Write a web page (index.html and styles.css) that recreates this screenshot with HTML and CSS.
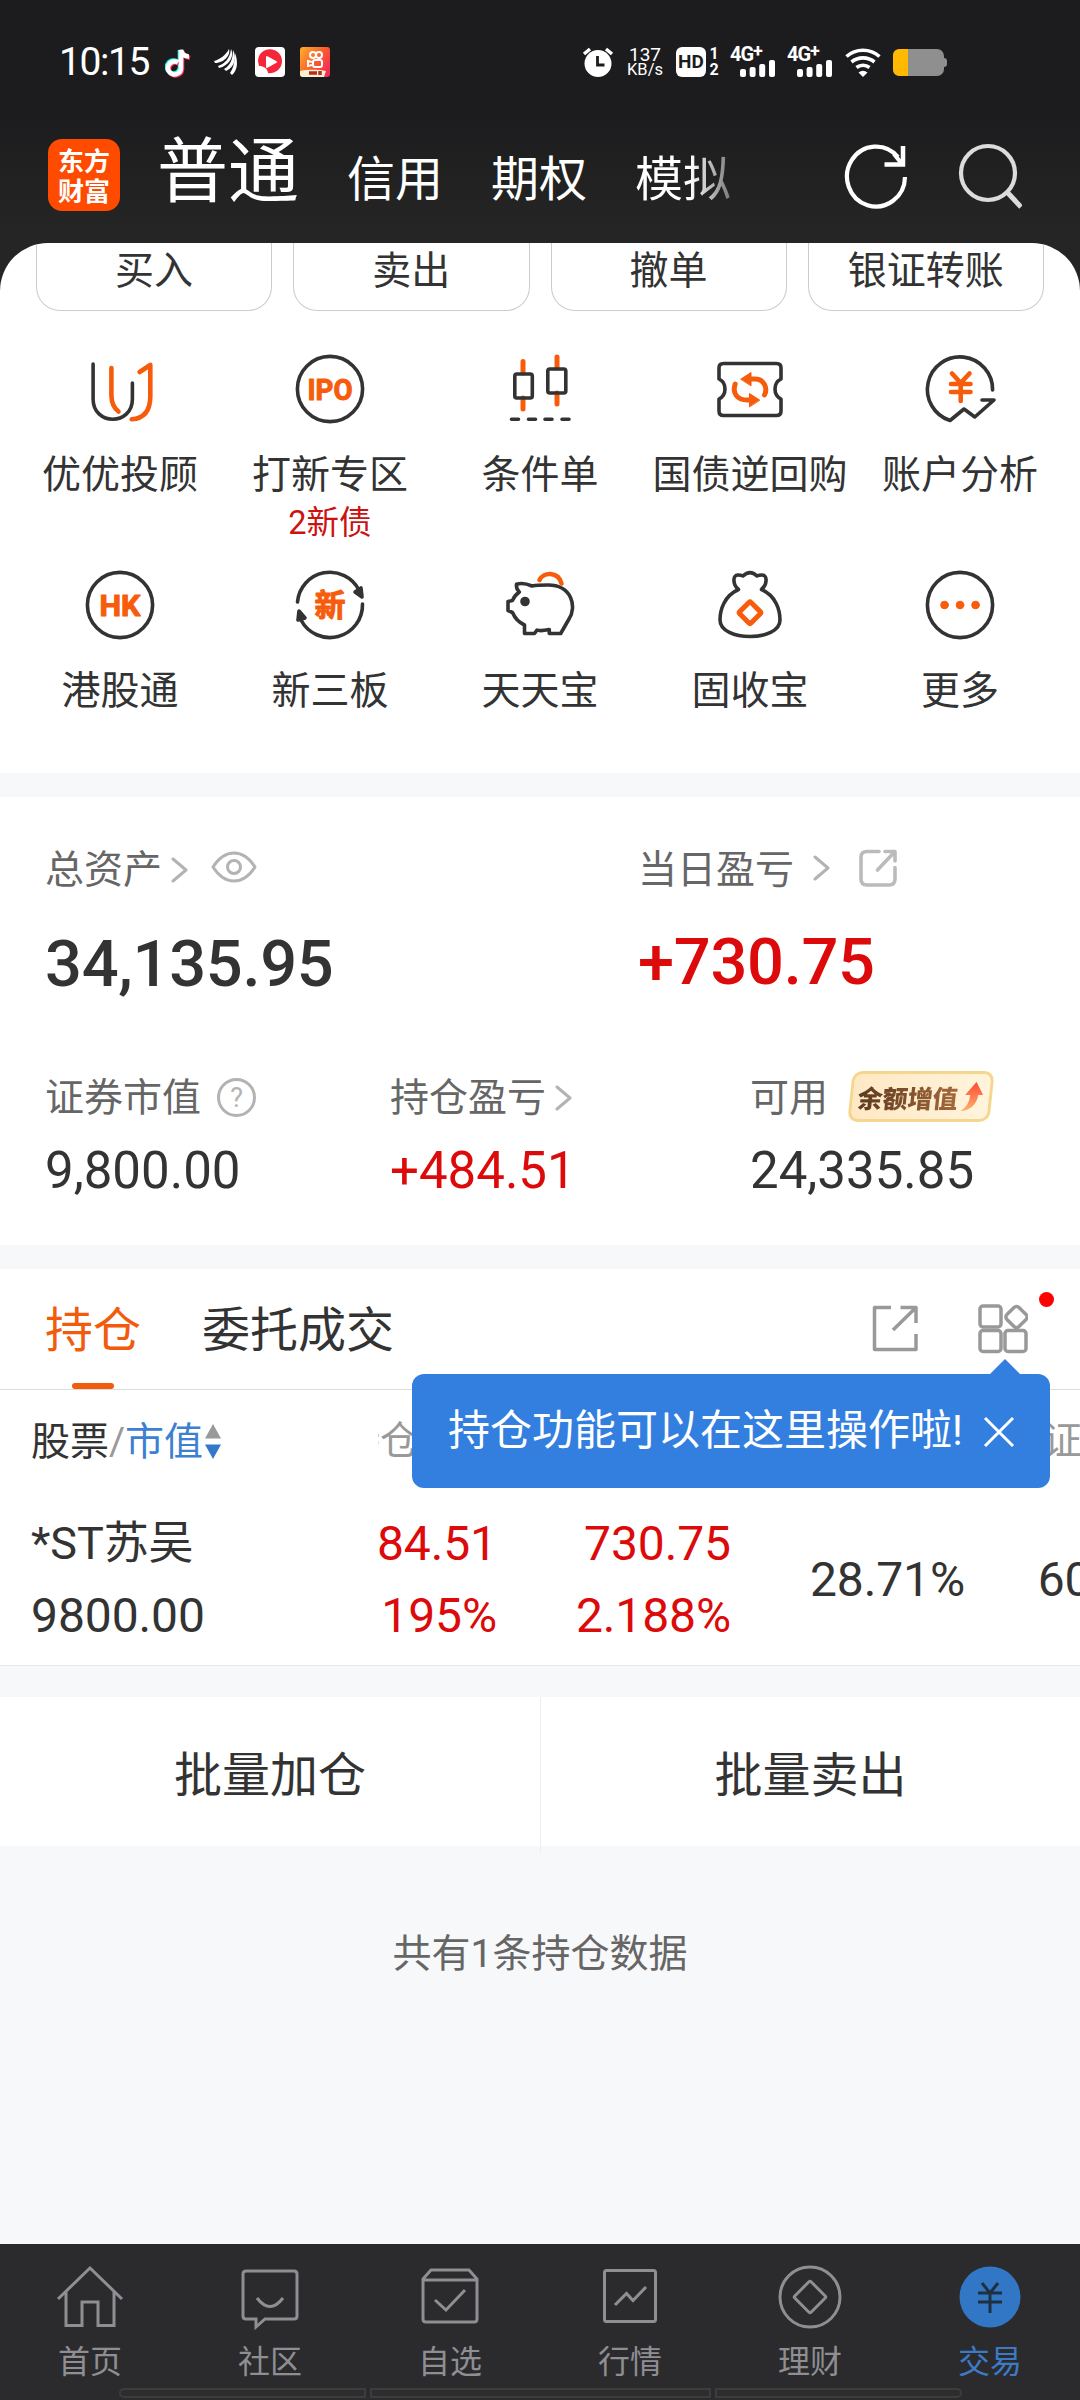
FILE: index.html
```html
<!DOCTYPE html>
<html lang="zh-CN">
<head>
<meta charset="utf-8">
<title>东方财富 交易</title>
<link rel="stylesheet" href="styles.css">
</head>
<body>
<div class="screen">
  <header class="top">
    <div class="status">
      <span class="clock">10:15</span>
      <svg class="st-tiktok" width="26" height="30" viewBox="0 0 26 30"><g fill="none" stroke-width="4.6"><path stroke="#25f4ee" d="M12 13.500a6.500 6.500 0 1 0 3 6V2c1 4 4 6 8 6"/><path stroke="#fe2c55" d="M14 15.500a6.500 6.500 0 1 0 3 6V3c1 4 4 6 8 7"/><path stroke="#fff" d="M13 14.500a6.500 6.500 0 1 0 3 6V2c1 4 4 6.500 8 6.500"/></g></svg>
      <svg class="st-wing" width="24" height="26" viewBox="0 0 24 26" fill="#fff"><path d="M0 12C5 11 12 6 15 0 17 7 9 14 1 14Z"/><path d="M4 17C11 15 16 9 17 0c4 8-3 17-12 19Z"/><path d="M10 20c6-3 9-10 9-19 4 7 2 17-7 21Z"/><path d="M16 24c3-4 5-11 5-20 3 8 3 17-3 22Z"/></svg>
      <svg class="st-video" width="30" height="30" viewBox="0 0 30 30"><rect width="30" height="30" rx="4" fill="#fff"/><path d="M3 14a12 12 0 1 1 10 12c-1-5-4-7-9-7Z" fill="#f5253a"/><path d="M12 10l9 5-9 5Z" fill="#fff" stroke="#fff" stroke-width="2" stroke-linejoin="round"/></svg>
      <svg class="st-kuai" width="30" height="30" viewBox="0 0 30 30"><defs><linearGradient id="kg" x1="0" x2="1" y2=".7"><stop stop-color="#fdb12b"/><stop offset=".6" stop-color="#fb5a2c"/><stop offset="1" stop-color="#f52c58"/></linearGradient></defs><rect width="30" height="30" rx="3" fill="url(#kg)"/><path d="M0 24c10-2 20-1 26 0l-2 6H3q-3 0-3-3Z" fill="#fff0cf"/><path d="M9 26h8M20 24v4" stroke="#b42c22" stroke-width="3.500"/><g fill="none" stroke="#fff" stroke-width="2"><circle cx="13" cy="8" r="3"/><circle cx="19" cy="8" r="3"/><rect x="13" y="13" width="9" height="7" rx="2"/><path d="M12 15l-4-1v5l4-1"/></g></svg>
      <svg class="st-alarm" width="32" height="30" viewBox="0 0 32 30"><circle cx="16" cy="16.500" r="13.500" fill="#fff"/><path d="M2 7l6-5M30 7l-6-5" stroke="#fff" stroke-width="3.500"/><path d="M15.500 9v9h7" fill="none" stroke="#1c1c1e" stroke-width="2.800"/></svg>
      <span class="speed"><b>137</b><i>KB/s</i></span>
      <span class="hd">HD</span>
      <span class="sims"><b>1</b><b>2</b></span>
      <span class="cell"><b>4G<sup>+</sup></b><svg width="36" height="17" viewBox="0 0 36 17" fill="#fff"><rect y="9" width="6" height="8" rx="2"/><rect x="9.600" y="7" width="6" height="10" rx="2"/><rect x="19.200" y="4" width="6" height="13" rx="2"/><rect x="29" width="6" height="17" rx="2"/></svg></span>
      <span class="cell"><b>4G<sup>+</sup></b><svg width="36" height="17" viewBox="0 0 36 17" fill="#fff"><rect y="9" width="6" height="8" rx="2"/><rect x="9.600" y="7" width="6" height="10" rx="2"/><rect x="19.200" y="4" width="6" height="13" rx="2"/><rect x="29" width="6" height="17" rx="2"/></svg></span>
      <svg class="st-wifi" width="36" height="30" viewBox="0 0 36 30" fill="none" stroke="#fff" stroke-width="3.600"><path d="M1.500 9.500a25 25 0 0 1 33 0M6.500 15a18 18 0 0 1 23 0M11.500 20.500a10.500 10.500 0 0 1 13 0"/><path d="M13.500 25.500q4.500-3.500 9 0L18 30Z" fill="#fff" stroke="none"/></svg>
      <svg class="st-batt" width="54" height="27" viewBox="0 0 54 27"><rect width="51" height="27" rx="7" fill="#8f8f8f"/><path d="M51 9q3 0 3 3v3q0 3-3 3Z" fill="#8f8f8f"/><path d="M15 0H7Q0 0 0 7v13q0 7 7 7h8Z" fill="#ffb900"/></svg>
    </div>
    <div class="titlebar">
      <div class="logo"><span>东方</span><span>财富</span></div>
      <nav class="accounts"><span class="acc on">普通</span><span class="acc">信用</span><span class="acc">期权</span><span class="acc fade">模拟</span></nav>
      <svg class="ic-refresh" width="64" height="66" viewBox="0 0 64 66" fill="none" stroke="#fff" stroke-width="4.200"><path d="M61 34A29 30 0 1 1 54 14"/><path d="M40.500 21.500H59V3" stroke-width="4.500"/><path d="M50 11l8 10"/></svg>
      <svg class="ic-search" width="64" height="66" viewBox="0 0 64 66" fill="none" stroke="#dcdcdc" stroke-width="4.200"><circle cx="30" cy="30" r="27"/><path d="M49 49l14 15" stroke-width="5"/></svg>
    </div>
  </header>

  <main class="panel">
    <div class="quick"><span>买入</span><span>卖出</span><span>撤单</span><span>银证转账</span></div>
    <div class="features">
      <div class="feat"><svg viewBox="-42 -42 84 84"><path d="M-26.900-25V10C-26.900 37 12.400 37 12.400 10V-6"/><path class="or" d="M-8.600-21V6Q-8.600 17-1.500 22.500M19.600-17L30.300-24V8Q30 29 11.700 30.300"/></svg><p>优优投顾</p></div>
      <div class="feat"><svg viewBox="-42 -42 84 84"><circle r="32.600"/><text class="t-ipo" y="10.500" textLength="45" lengthAdjust="spacingAndGlyphs">IPO</text></svg><p>打新专区</p><small>2新债</small></div>
      <div class="feat"><svg viewBox="-42 -42 84 84"><path class="or flat" d="M-17-27.500V-16M-17 9V20M17-32V-21M17 4V15"/><rect x="-25.200" y="-15" width="17.500" height="24" rx="2"/><rect x="7.800" y="-20" width="18" height="24" rx="2"/><path d="M-28.500 30.300h7M-11.500 30.300h7M5 30.300h7M22 30.300h7"/></svg><p>条件单</p></div>
      <div class="feat"><svg viewBox="-42 -42 84 84"><path d="M-26-25.500H26.500Q31 25.500 31-25.500Q31-25.500 31-21V-10Q19.500 0 31 10V22Q31 26.500 26.500 26.500H-26.500Q-31 26.500-31 22V10Q-19.500 0-31-10V-21Q-31-25.500-26-25.500Z" class="hide"/><path d="M-26.500-25.500H26.500Q31-25.500 31-21V-10C23-6 23 6 31 10V22Q31 26.500 26.500 26.500H-26.500Q-31 26.500-31 22V10C-23 6-23-6-31-10V-21Q-31-25.500-26.500-25.500Z"/><path class="or w5" d="M-1-10H5C14-10 18-1 14.500 6M-14.800-5C-18 4-13 11-3 11H3"/><path class="fill" d="M-9-10L1-16.500V-3.500ZM9.500 11L-.5 4.500V17.500Z"/></svg><p>国债逆回购</p></div>
      <div class="feat"><svg viewBox="-42 -42 84 84"><path d="M32.600 1A32.600 32.600 0 1 0-10 31.500L4 20L14.800 28L34 11H22"/><path class="or" d="M-8-15.500L.7-6L9.500-15.500M.7-6V12M-9-5H10.500M-9 3H10.500"/></svg><p>账户分析</p></div>
      <div class="feat"><svg viewBox="-42 -42 84 84"><circle r="32.600"/><text class="t-ipo" y="10.500" textLength="41" lengthAdjust="spacingAndGlyphs">HK</text></svg><p>港股通</p></div>
      <div class="feat"><svg viewBox="-42 -42 84 84"><path d="M-32.500-3A32.600 32.600 0 0 1 29-15M32.500-1A32.600 32.600 0 0 1-29 15"/><path class="ink" d="M25-13L31-17L32-8ZM-25 13L-32 15L-31 6Z"/><text class="t-xin" y="11">新</text></svg><p>新三板</p></div>
      <div class="feat"><svg viewBox="-42 -42 84 84"><path d="M-23.500-20.700Q-17-23-8-19Q-3-20 8-20C32-20 37 2 29 14L20.700 28.500H9.300V24.500Q0 26.500-3 25L-5.500 28.500H-15.500V20Q-24 16-27.500 7.500L-32 5.500V-3.500L-27.500-4.500Q-26-9-20.700-13Q-24-16-23.500-20.700Z"/><circle class="ink" cx="-15" cy="-3.500" r="3"/><path class="or" d="M-.5-25C3-33 18-34 21.500-21.500"/></svg><p>天天宝</p></div>
      <div class="feat"><svg viewBox="-42 -42 84 84"><path d="M-11.500-15.500C-17-20-18-30-12-30Q-9-30-7-29Q0-36 7-29Q9-30 12-30C18-30 17-20 11.500-15.500C26-9 30 5 30 15C30 37-30 37-30 15C-30 5-26-9-11.500-15.500Z"/><rect class="or w5" x="-8" y="-8" width="16" height="16" rx="1.500" transform="translate(0 7.700) rotate(45)"/></svg><p>固收宝</p></div>
      <div class="feat"><svg viewBox="-42 -42 84 84"><circle r="32.600"/><g class="fill"><circle cx="-15.500" r="3.800"/><circle r="3.800"/><circle cx="15.500" r="3.800"/></g></svg><p>更多</p></div>
    </div>
  </main>

  <section class="assets">
    <div class="totals">
      <div>
        <div class="lab">总资产<svg class="chev c1" width="18" height="26" viewBox="0 0 18 26"><path d="M2 2l13 11L2 24"/></svg><svg class="eye" width="46" height="32" viewBox="0 0 46 32"><path d="M2 16Q11 2 23 2T44 16Q35 30 23 30T2 16Z"/><circle cx="23" cy="16" r="6.500"/></svg></div>
        <div class="big">34,135.95</div>
      </div>
      <div>
        <div class="lab">当日盈亏<svg class="chev c2" width="18" height="26" viewBox="0 0 18 26"><path d="M2 2l13 11L2 24"/></svg><svg class="share" width="38" height="38" viewBox="0 0 38 38"><path d="M20 2.500H8Q2 2.500 2 8V30Q2 36 8 36H30Q36 36 36 30V18.500M26 2.500H36V12M35 3.500L18.500 21"/></svg></div>
        <div class="big red up">+730.75</div>
      </div>
    </div>
    <div class="detail">
      <div><div class="lab">证券市值<span class="help">?</span></div><div class="mid">9,800.00</div></div>
      <div><div class="lab">持仓盈亏<svg class="chev c3" width="18" height="26" viewBox="0 0 18 26"><path d="M2 2l13 11L2 24"/></svg></div><div class="mid red">+484.51</div></div>
      <div><div class="lab">可用<span class="promo"><b>余额增值</b><svg width="22" height="30" viewBox="0 0 22 30"><defs><linearGradient id="ag" x2="0" y2="1"><stop stop-color="#fb4a32"/><stop offset="1" stop-color="#ffb070"/></linearGradient></defs><path d="M13 0L21 13H16C16 22 9 29 0 29C6 25 8 20 8 13H3Z" fill="url(#ag)"/></svg></span></div><div class="mid">24,335.85</div></div>
    </div>
  </section>

  <section class="holdings">
    <div class="tabs">
      <span class="tab on">持仓</span><span class="tab">委托成交</span>
      <svg class="ic-share" width="48" height="48" viewBox="0 0 48 48"><path d="M19 2.500H2.500V44.500H44V29M28.500 2.500H44V18M43 3.500L21 25"/></svg>
      <span class="apps"><svg width="50" height="50" viewBox="0 0 50 50"><rect x="2" y="2" width="21" height="21" rx="3"/><rect x="2" y="26.500" width="21" height="21" rx="3"/><rect x="27" y="26.500" width="21" height="21" rx="3"/><rect x="-8.500" y="-8.500" width="17" height="17" rx="3.500" transform="translate(38.500 13) rotate(45)"/></svg><i class="dot"></i></span>
    </div>
    <div class="grid-head">
      <div class="name">股票<i>/</i><em>市值</em><svg width="16" height="36" viewBox="0 0 16 36"><path d="M8 0l8 14.500H0Z" fill="#999"/><path d="M8 35L0 20.500h16Z" fill="#3478c8"/></svg></div>
      <div class="cells"><span>持仓盈亏</span><span></span><span></span><span>证券代码</span></div>
    </div>
    <div class="grid-row">
      <div class="name"><span class="stock">*ST苏吴</span><span>9800.00</span></div>
      <div class="cells"><div class="red"><span>484.51</span><span>5.195%</span></div><div class="red"><span>730.75</span><span>2.188%</span></div><div><span>28.71%</span></div><div><span>600200</span></div></div>
    </div>
    <div class="tip"><span>持仓功能可以在这里操作啦!</span><svg width="32" height="32" viewBox="0 0 32 32"><path d="M2 2l28 28M30 2L2 30"/></svg></div>
  </section>

  <div class="batch"><span>批量加仓</span><span>批量卖出</span></div>
  <p class="count">共有1条持仓数据</p>

  <nav class="bottom">
    <div><svg viewBox="-36 -36 72 72"><path d="M-32 2L0-29L32 2M-24-5V28.500H-8V5H8V28.500H24V-5"/></svg><p>首页</p></div>
    <div><svg viewBox="-36 -36 72 72"><path d="M-24-26H24Q27-26 27-23V19Q27 22 24 22H-5L-14 30V22H-24Q-27 22-27 19V-23Q-27-26-24-26ZM-13 1Q0 18 13 1"/></svg><p>社区</p></div>
    <div><svg viewBox="-36 -36 72 72"><path d="M-27-18L-19-27H19L27-18V22Q27 25 24 25H-24Q-27 25-27 22ZM-27-17H27M-15 3L-4 13L15-7"/></svg><p>自选</p></div>
    <div><svg viewBox="-36 -36 72 72"><rect x="-25.500" y="-26.500" width="51" height="51" rx="2"/><path d="M-15 8L-3.500-3.500L3 3.500L16-10"/></svg><p>行情</p></div>
    <div><svg viewBox="-36 -36 72 72"><circle r="30"/><rect x="-11.500" y="-11.500" width="23" height="23" rx="1.500" transform="rotate(45)"/></svg><p>理财</p></div>
    <div class="on"><svg viewBox="-36 -36 72 72"><circle class="disc" r="30.500"/><path class="yen" d="M-8-14L0-4L8-14M0-4V16M-12-4H12M-12 5H12"/></svg><p>交易</p></div>
    <div class="strip"><i></i><i></i><i></i></div>
  </nav>
</div>
</body>
</html>
```
FILE: styles.css
```css
* { box-sizing: border-box; margin: 0; padding: 0; }
i, em { font-style: normal; }
body { background: #f7f8fa; font-family: Roboto, "Noto Sans CJK SC", sans-serif; color: #333; }
.screen { width: 1080px; height: 2400px; display: flex; flex-direction: column; overflow: hidden; position: relative; background: #f7f8fa; }
svg { flex: none; display: block; }
.red { color: #dc0a0a; }

.top { height: 300px; margin-bottom: -57px; flex: none; background: linear-gradient(#1c1c1e 110px, #252525 230px); color: #fff; }
.status { height: 124px; display: flex; align-items: center; padding-left: 59px; }
.clock { width: 91px; font-size: 39px; line-height: 40px; letter-spacing: -1.4px; white-space: nowrap; }
.st-tiktok { margin-left: 15px; margin-top: 2px; }
.st-wing { margin-left: 23px; }
.st-video { margin-left: 17px; }
.st-kuai { margin-left: 15px; }
.st-alarm { margin-left: 252px; }
.speed { width: 36px; margin-left: 13px; display: flex; flex-direction: column; align-items: center; line-height: 15px; }
.speed b { font-weight: 400; font-size: 19px; line-height: 15px; }
.speed i { font-size: 16.500px; line-height: 16px; }
.hd { width: 30px; height: 30px; margin-left: 13px; border-radius: 6px; background: #fff; color: #1c1c1e; font: 700 19px/30px Roboto, sans-serif; text-align: center; }
.sims { width: 12px; margin-left: 2px; display: flex; flex-direction: column; align-items: center; font-size: 16px; line-height: 16px; }
.cell { width: 46px; height: 30px; margin-left: 10px; display: flex; flex-direction: column; align-items: flex-end; }
.cell + .cell { margin-left: 11px; }
.cell b { width: 46px; height: 13px; font-size: 20px; line-height: 15px; letter-spacing: -1px; white-space: nowrap; }
.cell sup { font-size: 18px; line-height: 0; vertical-align: 4px; }
.cell svg { margin-right: 0; }
.st-wifi { margin-left: 12px; }
.st-batt { margin-left: 12px; }

.titlebar { display: flex; height: 104px; align-items: center; padding-left: 48px; }
.logo { width: 72px; height: 72px; margin-bottom: 2px; border-radius: 14px; background: #ff4b00; display: flex; flex-direction: column; align-items: center; justify-content: center; font: 700 26px/30px "Noto Sans CJK SC", sans-serif; flex: none; margin-top: 0; }
.accounts { display: flex; align-items: baseline; width: 640px; margin-left: 37px; }
.acc { font-size: 48px; line-height: 80px; margin-left: 48px; white-space: nowrap; }
.acc.on { font-size: 71px; margin-left: 0; }
.fade { background: linear-gradient(90deg, #fff 55px, #777 96px); -webkit-background-clip: text; background-clip: text; color: transparent; }
.ic-refresh { margin-left: 47px; }
.ic-search { margin-left: 50px; }

.panel { height: 530px; flex: none; border-radius: 48px 48px 0 0; background: #fff; overflow: hidden; }
.quick { display: grid; grid-template-columns: repeat(4, 1fr); gap: 21px; padding: 0 36px; height: 68px; }
.quick span { border: 1px solid #ccc; border-top: 0; border-radius: 0 0 24px 24px; padding-top: 8px; font-size: 39px; line-height: 40px; text-align: center; }
.features { display: grid; grid-template-columns: repeat(5, 210px); grid-template-rows: 216px 210px; padding: 36px 15px 0; }
.feat { display: flex; flex-direction: column; align-items: center; text-align: center; white-space: nowrap; }
.feat svg { width: 84px; height: 84px; fill: none; stroke: #333; stroke-width: 3.600; stroke-linecap: round; stroke-linejoin: round; }
.feat p { margin-top: 24px; font-size: 39px; line-height: 40px; }
.feat small { margin-top: 10px; font-size: 32.500px; line-height: 36px; color: #cc1212; }
.feat .or { stroke: #f75c0c; stroke-width: 4.600; }
.feat .w5 { stroke-width: 5; }
.feat .flat { stroke-width: 5; }
.feat .fill { fill: #f75c0c; stroke: #f75c0c; stroke-width: 1; }
.feat .ink { fill: #333; }
.feat .hide { display: none; }
.feat text { fill: #f75c0c; stroke: #f75c0c; stroke-width: 1; text-anchor: middle; font-weight: 700; }
.t-ipo { font-size: 29px; }
.t-xin { font-size: 31px; }

.assets { height: 448px; margin-top: 24px; flex: none; background: #fff; padding: 53px 0 0 45px; }
.lab { display: flex; align-items: center; height: 40px; font-size: 39px; line-height: 40px; color: #666; white-space: nowrap; }
.totals { display: grid; grid-template-columns: 593px 1fr; }
.detail { display: grid; grid-template-columns: 345px 360px 1fr; margin-top: 82px; }
.big { margin-top: 42px; height: 64px; font-size: 65px; line-height: 64px; font-weight: 500; letter-spacing: -.3px; }
.big.up { margin-top: 40px; }
.mid { margin-top: 28px; font-size: 51px; line-height: 50px; }
.chev, .eye, .share { fill: none; stroke: #b3b3b3; stroke-width: 3; stroke-linecap: round; stroke-linejoin: round; }
.c1 { margin-left: 9px; }
.c2 { margin-left: 19px; margin-top: -4px; }
.c3 { margin-left: 9px; }
.eye { margin: -6px 0 0 22px; }
.share { margin: -4px 0 0 28px; stroke-width: 3.600; stroke: #bbb; }
.help { width: 39px; height: 39px; margin: -1px 0 0 16px; border: 3px solid #b3b3b3; border-radius: 50%; font-size: 27px; line-height: 34px; text-align: center; color: #b3b3b3; }
.promo { width: 142px; height: 51px; margin: -3px 0 0 22px; border: 3px solid #f6d68c; border-radius: 10px; background: linear-gradient(90deg, #ffe8c4, #fff4dc); transform: skewX(-6deg); display: flex; align-items: center; justify-content: center; gap: 4px; }
.promo b { font: 900 25px/40px "Noto Sans CJK SC", sans-serif; background: linear-gradient(90deg, #5c3a20, #a5683a); -webkit-background-clip: text; background-clip: text; color: transparent; }

.holdings { height: 397px; margin-top: 24px; flex: none; position: relative; background: #fff; }
.tabs { height: 121px; display: flex; align-items: center; border-bottom: 1px solid #ddd; padding-left: 45px; }
.tab { font-size: 48px; line-height: 120px; height: 120px; padding-top: 2px; margin-right: 61px; position: relative; }
.tab.on { color: #f25b0c; }
.tab.on::after { content: ""; position: absolute; left: 27px; bottom: 0; width: 42px; height: 6px; border-radius: 3px; background: #f25b0c; }
.ic-share, .apps svg { fill: none; stroke: #999; stroke-width: 3.500; stroke-linejoin: round; }
.ic-share { margin-left: 417px; }
.apps { position: relative; margin-left: 58px; }
.dot { position: absolute; left: 61px; top: -12px; width: 15px; height: 15px; border-radius: 50%; background: #f00; }
.grid-head { display: flex; height: 100px; padding-top: 3px; font-size: 39px; line-height: 100px; }
.name { width: 378px; padding-left: 31px; flex: none; white-space: nowrap; }
.grid-head .name { display: flex; align-items: center; height: 97px; }
.grid-head .name i { color: #999; width: 16px; text-align: center; }
.grid-head em { color: #3d7fd0; }
.grid-head svg { margin-left: 2px; }
.cells { display: flex; flex: 1; min-width: 0; overflow: hidden; }
.cells > * { flex: none; width: 234px; display: flex; justify-content: flex-end; white-space: nowrap; }
.cells > :first-child { width: 119px; }
.grid-head .cells { color: #999; line-height: 97px; }
.grid-row { display: flex; height: 176px; padding-top: 18px; border-bottom: 1px solid #e8e8e8; font-size: 48px; line-height: 72px; letter-spacing: -.1px; }
.grid-row .name { display: flex; flex-direction: column; }
.stock { font-size: 45px; }
.grid-row .cells { height: 144px; }
.grid-row .cells > div { flex-direction: column; align-items: flex-end; justify-content: center; }
.tip { position: absolute; left: 412px; top: 105px; width: 638px; height: 114px; border-radius: 12px; background: #337fe0; color: #fff; display: flex; align-items: center; padding-left: 36px; font-size: 42px; line-height: 114px; white-space: nowrap; }
.tip::before { content: ""; position: absolute; left: 578px; top: -15px; border: 15px solid transparent; border-top: 0; border-bottom-color: #337fe0; }
.tip svg { fill: none; stroke: #fff; stroke-width: 3; position: absolute; left: 571px; top: 42px; }

.batch { display: grid; grid-template-columns: 1fr 1fr; height: 149px; margin-top: 31px; flex: none; background: #fff; text-align: center; font-size: 48px; line-height: 157px; }
.batch span + span { border-left: 1px solid #eee; }
.count { margin-top: 88px; font-size: 39px; line-height: 40px; text-align: center; color: #666; }

.bottom { height: 156px; margin-top: auto; flex: none; background: #2b2b2d; display: grid; grid-template-columns: repeat(6, 180px); position: relative; color: #8e8e93; text-align: center; }
.bottom svg { width: 72px; height: 72px; margin: 17px auto 0; fill: none; stroke: #8e8e93; stroke-width: 3; }
.bottom p { margin-top: 11px; font-size: 32px; line-height: 36px; }
.bottom .on { color: #3d7ac6; }
.bottom .disc { fill: #3177c6; stroke: none; }
.bottom .yen { stroke: #20303f; }
.strip { position: absolute; left: 119px; bottom: 2px; display: flex; gap: 4px; }
.strip i { width: 247px; height: 10px; border: 2px solid #3c3c3d; background: #2c2d2c; }
.strip i:first-child { border-radius: 5px 0 0 5px; }
.strip i:nth-child(2) { width: 341px; }
.strip i:last-child { border-radius: 0 5px 5px 0; }
```
